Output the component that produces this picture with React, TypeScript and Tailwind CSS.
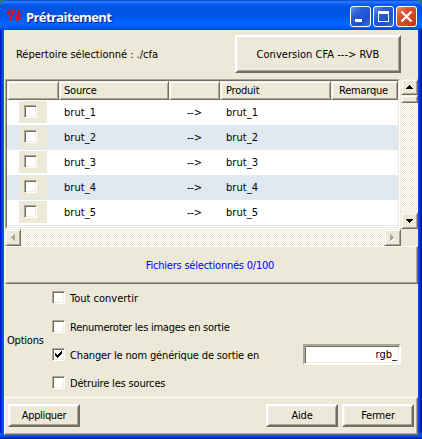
import React from "react";

const raised =
  "bg-[#ece9d8] border-2 border-t-white border-l-white border-r-[#716f64] border-b-[#716f64] shadow-[inset_1px_1px_0_#f1efe2,inset_-1px_-1px_0_#aca899]";
const raisedThin =
  "bg-[#ece9d8] border border-t-[#f1efe2] border-l-[#f1efe2] border-r-[#716f64] border-b-[#716f64] shadow-[inset_1px_1px_0_#ffffff,inset_-1px_-1px_0_#aca899]";
const trough =
  "bg-[repeating-conic-gradient(#ffffff_0_25%,#ece9d8_0_50%)] bg-[length:2px_2px]";

function Box({ checked = false }: { checked?: boolean }) {
  return (
    <span className="block h-[13px] w-[13px] shrink-0 border border-t-[#aca899] border-l-[#aca899] border-r-white border-b-white bg-white shadow-[inset_1px_1px_0_#716f64,inset_-1px_-1px_0_#f1efe2]">
      {checked && (
        <svg width="11" height="11" viewBox="0 0 11 11" shapeRendering="crispEdges">
          <path d="M2 4h1v1h1v1h1v-1h1v-1h1v-1h1v-1h1v3h-1v1h-1v1h-1v1h-1v1h-1v-1h-1v-1h-1z" fill="#000" />
        </svg>
      )}
    </span>
  );
}

function HeaderCell({ className, children }: { className: string; children?: React.ReactNode }) {
  return <div className={`h-[19px] shrink-0 overflow-hidden pt-px leading-[15px] ${raisedThin} ${className}`}>{children}</div>;
}

function Row({ n }: { n: number }) {
  return (
    <div className={`flex h-[25px] leading-[25px] ${n % 2 === 0 ? "bg-[#e0e8f0]" : "bg-white"}`}>
      <div className="w-[57px] pt-px pl-3">
        <div className="h-[22px] w-[28px] bg-[#ece9d8] pt-1 pl-[5px]">
          <Box />
        </div>
      </div>
      <div className="w-[122px] tracking-[0.05px]">brut_{n}</div>
      <div className="w-[40px] pl-px">--&gt;</div>
      <div className="tracking-[0.05px]">brut_{n}</div>
    </div>
  );
}

function Option({ label, className, checked }: { label: string; className: string; checked?: boolean }) {
  return (
    <div className={`flex h-[13px] items-center gap-[5px] whitespace-nowrap leading-[13px] ${className}`}>
      <Box checked={checked} />
      <span className="pt-px">{label}</span>
    </div>
  );
}

export default function App() {
  return (
    <div className="flex h-[439px] w-[422px] flex-col overflow-hidden bg-[#2a7a7a] font-['DejaVu_Sans_Condensed','DejaVu_Sans',sans-serif] text-[11px] tracking-[-0.22px] whitespace-nowrap text-black [font-stretch:condensed]">
      <div className="flex h-[30px] shrink-0 items-center rounded-t-[7px] bg-[linear-gradient(to_bottom,#0843c6_0px,#2a80ff_2px,#0a5df0_4px,#0054e3_8px,#0055e5_15px,#0066ff_23px,#0062f6_27px,#0046cc_30px)] pr-[5px] pl-[7px]">
        <svg width="15" height="12" viewBox="0 0 15 12" fill="none" stroke="#ff0000" strokeWidth="2" className="mt-px">
          <path d="M0.5 4L2 1.6L9 1M6.4 1.5Q4 5 3 11" />
          <path d="M12 0L8.6 11M14.2 4.2L10 6.8L11.8 9.6L14 8.6" strokeWidth="1.8" />
        </svg>
        <span className="ml-[4px] flex-1 pt-[4px] font-['Open_Sans','Noto_Sans',sans-serif] text-[13px] leading-[18px] font-bold tracking-[-0.6px] text-white [font-stretch:normal] [text-shadow:1px_1px_#0a1883]">
          Prétraitement
        </span>
        <div className="mt-[3px] flex gap-[2px]">
          <span className="h-[21px] w-[21px] rounded-[3px] border border-white bg-[linear-gradient(135deg,#6a95e8,#2a5fd8_30%,#1e50cb_70%,#3b6fe8)]">
            <svg width="19" height="19" viewBox="0 0 19 19"><path d="M4 12h7v3h-7z" fill="#fff" /></svg>
          </span>
          <span className="h-[21px] w-[21px] rounded-[3px] border border-white bg-[linear-gradient(135deg,#6a95e8,#2a5fd8_30%,#1e50cb_70%,#3b6fe8)]">
            <svg width="19" height="19" viewBox="0 0 19 19" shapeRendering="crispEdges"><path fillRule="evenodd" d="M4 4h11v11h-11zM5 7v7h9v-7z" fill="#fff" /></svg>
          </span>
          <span className="h-[21px] w-[21px] rounded-[3px] border border-white bg-[linear-gradient(135deg,#eb9378,#dc5331_30%,#d1431f_70%,#b9330e)]">
            <svg width="19" height="19" viewBox="0 0 19 19"><path d="M4.5 4.5l10 10M14.5 4.5l-10 10" stroke="#fff" strokeWidth="2.2" /></svg>
          </span>
        </div>
      </div>

      <div className="flex min-h-0 flex-1 bg-[linear-gradient(to_bottom,transparent_401px,#0a5ae8_405px,#0041dc_407px,#00138c_409px),linear-gradient(to_right,#0019cf_0,#0019cf_1px,#0f46e4_2px,#0a5ae8_4px,#0a5ae8_418px,#0041dc_419px,#001ea0_421px,#00138c_422px)] px-[4px] pb-[4px]">
      <div className="flex min-h-0 flex-1 flex-col bg-[#ece9d8] shadow-[inset_1px_0_0_#f1efe2]">
        <div className="flex h-[49px] shrink-0 pl-3">
          <span className="w-[219px] pt-[17px] leading-[15px] tracking-[-0.02px]">Répertoire sélectionné : ./cfa</span>
          <button className={`mt-[5px] h-[38px] w-[166px] pt-[2px] tracking-[0.03px] ${raised}`}>Conversion CFA ---&gt; RVB</button>
        </div>

        <div className="flex h-[150px] shrink-0">
          <div className="ml-px w-[395px] border border-t-[#aca899] border-l-[#aca899] border-r-white border-b-white bg-white">
            <div className="h-full border border-t-[#716f64] border-l-[#716f64] border-r-[#ece9d8] border-b-[#ece9d8]">
              <div className="flex">
                <HeaderCell className="w-[52px]" />
                <HeaderCell className="w-[110px] pl-[4px]">Source</HeaderCell>
                <HeaderCell className="w-[51px]" />
                <HeaderCell className="w-[111px] pl-[5px]">Produit</HeaderCell>
                <HeaderCell className="w-[67px] pl-[7px]">Remarque</HeaderCell>
              </div>
              {[1, 2, 3, 4, 5].map((n) => <Row key={n} n={n} />)}
              <div className="h-px bg-[#e0e8f0]" />
            </div>
          </div>
          <div className={`flex w-[18px] flex-col border-l border-[#f1efe2] ${trough}`}>
            <div className={`flex h-4 items-center justify-center ${raisedThin}`}>
              <svg width="7" height="4" shapeRendering="crispEdges"><path d="M3 0h1v1h1v1h1v1h1v1h-7v-1h1v-1h1v-1h1z" /></svg>
            </div>
            <div className={`h-2 ${raisedThin}`} />
            <div className="flex-1" />
            <div className={`flex h-[17px] items-center justify-center ${raisedThin}`}>
              <svg width="7" height="4" shapeRendering="crispEdges"><path d="M0 0h7v1h-1v1h-1v1h-1v1h-1v-1h-1v-1h-1v-1h-1z" /></svg>
            </div>
          </div>
        </div>

        <div className={`ml-px flex h-[17px] w-[396px] shrink-0 justify-between ${trough}`}>
          <div className={`flex w-4 items-center justify-center ${raisedThin}`}>
            <svg width="4" height="7" shapeRendering="crispEdges"><path d="M4 0v7h-1v-1h-1v-1h-1v-1h-1v-1h1v-1h1v-1h1v-1z" fill="#aca899" /></svg>
          </div>
          <div className={`flex w-[17px] items-center justify-center ${raisedThin}`}>
            <svg width="5" height="8" shapeRendering="crispEdges">
              <path d="M1 1h1v1h1v1h1v1h1v1h-1v1h-1v1h-1v1h-1z" fill="#fff" />
              <path d="M0 0v7h1v-1h1v-1h1v-1h1v-1h-1v-1h-1v-1h-1v-1z" fill="#aca899" />
            </svg>
          </div>
        </div>

        <div className="ml-px flex h-[38px] shrink-0 items-center justify-center border border-t-white border-l-white border-r-[#716f64] border-b-[#716f64] pt-[2px] pr-[3px] text-[#0000ff] shadow-[inset_-1px_-1px_0_#aca899]">
          Fichiers sélectionnés 0/100
        </div>

        <div className="flex h-[113px] shrink-0">
          <div className="flex w-[48px] items-center pt-[2px] pl-[3px]">Options</div>
          <div className="flex flex-col pt-[7px]">
            <Option label="Tout convertir" className="mb-4 tracking-[0]" />
            <Option label="Renumeroter les images en sortie" className="mb-[15px] tracking-[-0.25px]" />
            <Option label="Changer le nom générique de sortie en" className="mb-[15px] tracking-[-0.15px]" checked />
            <Option label="Détruire les sources" className="tracking-[-0.18px]" />
          </div>
          <div className="mt-[60px] mr-[17px] ml-auto h-[21px] w-[98px] border-2 border-t-[#aca899] border-l-[#aca899] border-r-white border-b-white bg-white pr-[2px] text-right leading-[18px] tracking-normal shadow-[inset_1px_1px_0_#716f64,inset_-1px_-1px_0_#f1efe2]">
            rgb_
          </div>
        </div>

        <div className="flex min-h-0 flex-1 gap-1 border border-t-white border-l-white border-r-[#716f64] border-b-[#716f64] pt-[6px] pr-[3px] pl-[3px] shadow-[inset_-1px_-1px_0_#aca899]">
          <button className={`mr-auto h-[23px] w-[72px] pt-px leading-[18px] tracking-[-0.35px] ${raised}`}>Appliquer</button>
          <button className={`h-[23px] w-[72px] pt-px leading-[18px] ${raised}`}>Aide</button>
          <button className={`h-[23px] w-[72px] pt-px leading-[18px] ${raised}`}>Fermer</button>
        </div>
      </div>
      </div>
    </div>
  );
}
